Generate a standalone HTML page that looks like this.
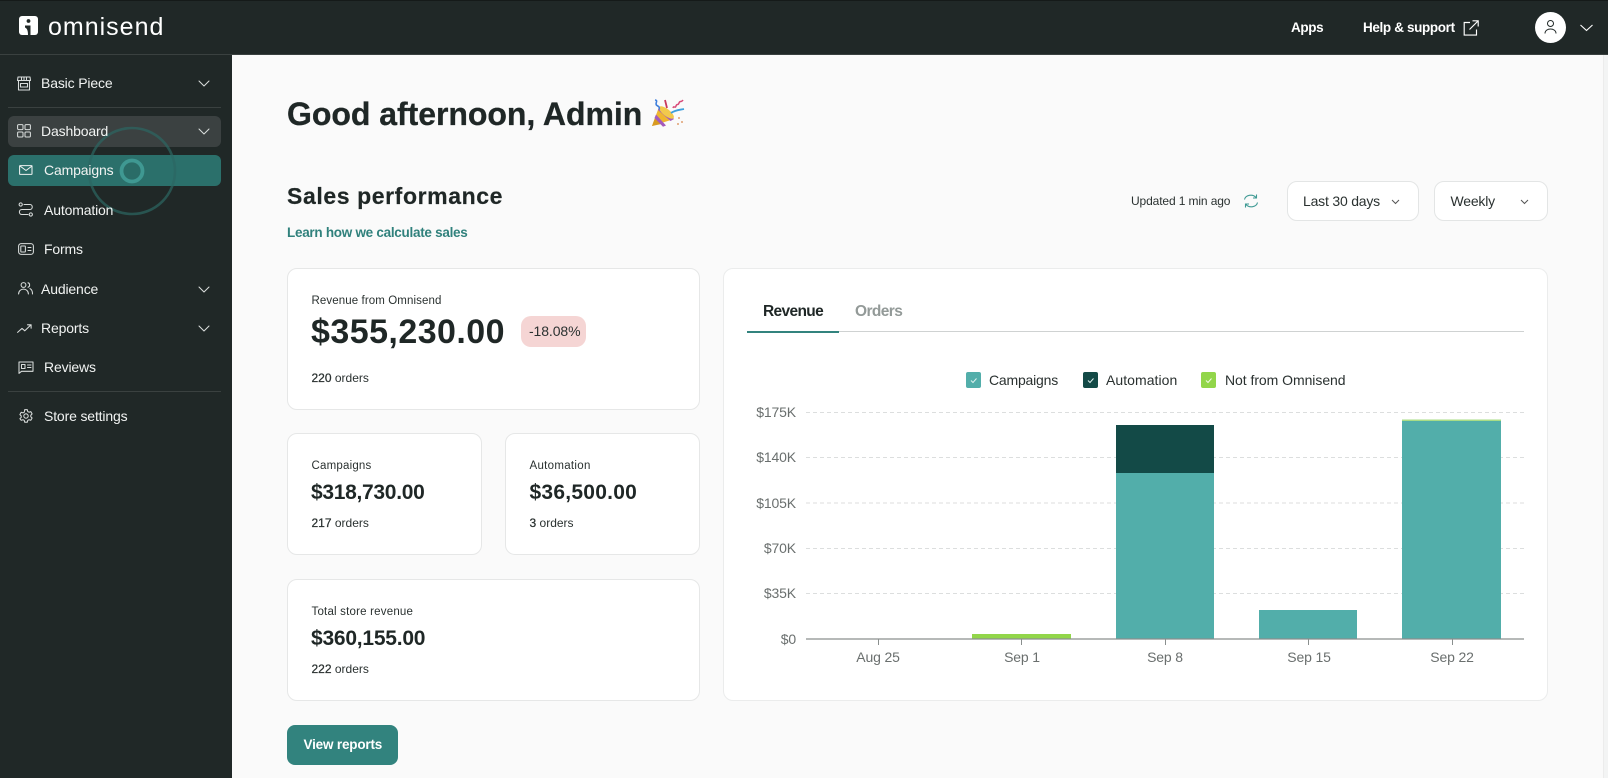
<!DOCTYPE html>
<html lang="en"><head><meta charset="utf-8"><title>Omnisend</title>
<style>
*{box-sizing:border-box;margin:0;padding:0}
html,body{width:1608px;height:778px;overflow:hidden;background:#fafafa;font-family:"Liberation Sans",sans-serif;color:#1f2726}
.t{position:absolute;white-space:nowrap;line-height:20px;height:20px}
.side{position:absolute;left:0;top:0;width:232px;height:778px;background:#202827}
.top{position:absolute;left:0;top:0;width:1608px;height:55px;background:#202827;border-top:1px solid #151a19;border-bottom:1px solid #3a4140}
.n{color:#f1f3f2;font-size:14px;letter-spacing:-.15px}
.card{position:absolute;background:#fff;border:1px solid #e6e7e7;border-radius:10px}
.lab{font-size:11.5px;letter-spacing:.2px;color:#2a3130}
.val{font-weight:700;font-size:21px;letter-spacing:-.3px}
.ord{font-size:12px;color:#2a3130}
.ord b{font-weight:400;-webkit-text-stroke:.25px #2a3130}
.ax{font-size:14px;color:#6a6f6e;letter-spacing:-.15px}
.leg{font-size:14px;color:#2a3130}
.sel{position:absolute;background:#fff;border:1px solid #e3e5e5;border-radius:10px;height:40px}
svg{position:absolute;overflow:visible}
.ic{fill:none;stroke:#d9dddc;stroke-width:1.05;stroke-linecap:round;stroke-linejoin:round}
</style></head><body>

<div class="side"></div>
<div class="top"></div>

<!-- logo -->
<svg style="left:19px;top:16px" width="20" height="20" viewBox="0 0 20 20"><rect width="19" height="19" rx="3" fill="#fff"/><circle cx="9.500" cy="5" r="1.900" fill="#202827"/><path d="M6 9.500h5.500v9.500H9c0-3.500-.5-6.500-3-7.500z" fill="#202827"/></svg>
<div class="t" style="left:48px;top:17px;font-size:25px;line-height:20px;color:#fff;letter-spacing:1px">omnisend</div>

<!-- top right -->
<div class="t" style="left:1291px;top:18px;color:#fff;font-size:13.5px;font-weight:700;letter-spacing:-.38px">Apps</div>
<div class="t" style="left:1363px;top:18px;color:#fff;font-size:13.5px;font-weight:700;letter-spacing:-.36px">Help &amp; support</div>
<svg style="left:1463px;top:20px" width="16" height="16" viewBox="0 0 16 16" fill="none" stroke="#fff" stroke-width="1.150"><path d="M7 2.500H1.200v12.600h12.300V9.500M9.500 .8h5.700v5.700M15 1L6.500 9.500"/></svg>
<svg style="left:1535px;top:12px" width="31" height="31" viewBox="0 0 31 31"><circle cx="15.500" cy="15.500" r="15.500" fill="#fff"/><circle cx="15.500" cy="11.500" r="3" fill="none" stroke="#202827" stroke-width="1"/><path d="M10 21.500c0-6 11-6 11 0" fill="none" stroke="#202827" stroke-width="1"/></svg>
<svg style="left:1580px;top:24px" width="13" height="8" viewBox="0 0 13 8" fill="none" stroke="#fff" stroke-width="1.100"><path d="M.5 1l6 5.500 6-5.500"/></svg>

<!-- nav -->
<div style="position:absolute;left:8px;top:107px;width:213px;height:1px;background:#3a4140"></div>
<div style="position:absolute;left:8px;top:116px;width:213px;height:31px;background:#3b4141;border-radius:6px"></div>
<div style="position:absolute;left:8px;top:155px;width:213px;height:31px;background:#2b706b;border-radius:6px"></div>
<div style="position:absolute;left:8px;top:391px;width:213px;height:1px;background:#3a4140"></div>

<!-- ripple -->
<svg style="left:85px;top:124px" width="94" height="94" viewBox="0 0 94 94" fill="none"><circle cx="47" cy="47" r="43" stroke="#2c6662" stroke-width="2.600" opacity=".7"/><circle cx="47" cy="47" r="10.500" stroke="#3f9892" stroke-width="3.800" fill="#2a6c67"/></svg>

<!-- nav icons -->
<svg class="ic" style="left:17px;top:76px" width="14" height="15" viewBox="0 0 14 15"><path d="M1 1h12l.5 3.500H.5zM1.500 4.500V14h11V4.500M3.500 7.500h7v3.500h-7zM4.500 1v3.500M7 1v3.500M9.500 1v3.500"/></svg>
<svg class="ic" style="left:17px;top:124px" width="14" height="14" viewBox="0 0 14 14"><rect x=".6" y=".6" width="5.400" height="5" rx="1"/><rect x="8" y=".6" width="5.400" height="5" rx="1"/><rect x=".6" y="8" width="5.400" height="5" rx="1"/><rect x="8" y="8" width="5.400" height="5" rx="1"/></svg>
<svg class="ic" style="left:19px;top:165px;stroke:#eef2f1" width="14" height="10" viewBox="0 0 14 10"><rect x=".6" y=".6" width="12.400" height="8.800" rx=".5"/><path d="M1 1l6 4.500L13 1"/></svg>
<svg class="ic" style="left:18px;top:202px" width="16" height="15" viewBox="0 0 16 15"><circle cx="2.700" cy="2.500" r="1.600"/><circle cx="12.800" cy="12.500" r="1.600"/><path d="M6 2.500h6c3 0 3 5 0 5H4c-3.500 0-3.500 5 0 5h6"/></svg>
<svg class="ic" style="left:18px;top:243px" width="16" height="12" viewBox="0 0 16 12"><rect x=".6" y=".6" width="14.800" height="10.800" rx="2.500"/><rect x="2.800" y="3" width="4.600" height="6" rx=".6"/><path d="M10 4.500h3M10 7.500h3"/></svg>
<svg class="ic" style="left:18px;top:282px" width="15" height="13" viewBox="0 0 15 13"><circle cx="5.500" cy="3" r="2.400"/><path d="M.6 12c0-6.500 9.800-6.500 9.800 0M10 .8c2 .3 2.300 3.800 0 4.400M12 6.600c1.800.8 2.500 2.800 2.500 5.400"/></svg>
<svg class="ic" style="left:17px;top:324px" width="15" height="9" viewBox="0 0 15 9"><path d="M.6 8.400l4.400-4 2.800 2.400L13.800 1M10.500.8h3.600v3.400"/></svg>
<svg class="ic" style="left:18px;top:361px" width="16" height="13" viewBox="0 0 16 13"><path d="M1 1h14v9.300H3.500L1 12.400z"/><rect x="3.500" y="3.500" width="3.500" height="4"/><path d="M9.500 4h3.500M9.500 6.500h3.500"/></svg>
<svg class="ic" style="left:19px;top:409px" width="14" height="14" viewBox="0 0 14 14"><circle cx="7" cy="7" r="2.200"/><path d="M5.700 .7h2.600l.4 1.800 1.300.7 1.800-.6 1.300 2.300-1.300 1.300v1.500l1.300 1.300-1.300 2.300-1.800-.6-1.300.7-.4 1.800H5.700l-.4-1.800-1.300-.7-1.800.6L.9 9.700l1.300-1.300V6.900L.9 5.600l1.300-2.300 1.800.6 1.300-.7z"/></svg>

<div class="t n" style="left:41px;top:73px">Basic Piece</div>
<div class="t n" style="left:41px;top:121px">Dashboard</div>
<div class="t n" style="left:44px;top:160px">Campaigns</div>
<div class="t n" style="left:44px;top:200px">Automation</div>
<div class="t n" style="left:44px;top:239px">Forms</div>
<div class="t n" style="left:41px;top:279px">Audience</div>
<div class="t n" style="left:41px;top:318px">Reports</div>
<div class="t n" style="left:44px;top:357px">Reviews</div>
<div class="t n" style="left:44px;top:406px">Store settings</div>

<svg class="ic" style="left:198px;top:80px" width="12" height="7" viewBox="0 0 12 7"><path d="M1 1l5 5 5-5"/></svg>
<svg class="ic" style="left:198px;top:128px" width="12" height="7" viewBox="0 0 12 7"><path d="M1 1l5 5 5-5"/></svg>
<svg class="ic" style="left:198px;top:286px" width="12" height="7" viewBox="0 0 12 7"><path d="M1 1l5 5 5-5"/></svg>
<svg class="ic" style="left:198px;top:325px" width="12" height="7" viewBox="0 0 12 7"><path d="M1 1l5 5 5-5"/></svg>

<!-- scrollbar edge -->
<div style="position:absolute;left:1603px;top:55px;width:5px;height:723px;background:#f3f4f4;border-left:1px solid #ececec"></div>

<!-- headings -->
<div class="t" style="left:287px;top:104px;font-size:32px;font-weight:700;letter-spacing:-.04px;color:#1f2726;-webkit-text-stroke:.3px #1f2726">Good afternoon, Admin</div>
<svg style="left:651px;top:98px" width="34" height="30" viewBox="0 0 34 30">
<path d="M1 28L8 9l15 12z" fill="#efb62f"/><path d="M1 28l3.500-9.500 6 7.500z" fill="#d89a22"/><path d="M5 16.500l10 11-3 1.200L3.500 20zM8 9l15 12-3.500 2L7 12z" fill="#a35bbd"/><ellipse cx="15.500" cy="14.500" rx="3.500" ry="9" transform="rotate(-52 15.500 14.500)" fill="#f2c94c"/>
<path d="M4 2c4 .5-1 4 2 5.500 2 1 3 2 2 4" fill="none" stroke="#3f7fdc" stroke-width="1.600"/><path d="M14 2l2 8" stroke="#c93a5f" stroke-width="1.800"/><path d="M22 10c1-3 2 1 3-2s2 0 3-3 2 0 4-3" fill="none" stroke="#d84a78" stroke-width="1.500"/><path d="M20 15c4-3 8-3 13-4" fill="none" stroke="#3f9fdc" stroke-width="1.800"/><circle cx="28" cy="20" r="1" fill="#e0a070"/><circle cx="31" cy="24" r="1" fill="#e0a070"/><circle cx="27" cy="26" r="1" fill="#e0a070"/>
</svg>
<div class="t" style="left:287px;top:186px;font-size:23px;font-weight:700;letter-spacing:.6px;-webkit-text-stroke:.2px #1f2726">Sales performance</div>
<div class="t" style="left:287px;top:223px;font-size:13.5px;font-weight:700;color:#30817c;letter-spacing:-.28px">Learn how we calculate sales</div>

<!-- filters -->
<div class="t" style="left:1131px;top:191px;font-size:12px;color:#2a3130;letter-spacing:-.12px">Updated 1 min ago</div>
<svg style="left:1243px;top:193px" width="16" height="16" viewBox="0 0 16 16" fill="none" stroke="#3f9a94" stroke-width="1.100"><path d="M1.500 6.500C2.500 2 9.500 .5 13 4.500M14.500 9.500C13.500 14 6.500 15.500 3 11.500M13.500 1.500v3.500H10M2.500 14.500V11H6"/></svg>
<div class="sel" style="left:1287px;top:181px;width:132px"></div>
<div class="sel" style="left:1434px;top:181px;width:114px"></div>
<div class="t" style="left:1303px;top:191px;font-size:14px;color:#2a3130;letter-spacing:-.2px">Last 30 days</div>
<div class="t" style="left:1450.500px;top:191px;font-size:14px;color:#2a3130;letter-spacing:-.2px">Weekly</div>
<svg style="left:1391px;top:199px" width="9" height="6" viewBox="0 0 9 6" fill="none" stroke="#555" stroke-width="1"><path d="M1 1l3.500 3.500L8 1"/></svg>
<svg style="left:1520px;top:199px" width="9" height="6" viewBox="0 0 9 6" fill="none" stroke="#555" stroke-width="1"><path d="M1 1l3.500 3.500L8 1"/></svg>

<!-- left cards -->
<div class="card" style="left:287px;top:268px;width:413px;height:142px"></div>
<div class="t lab" style="left:311.500px;top:291px;letter-spacing:.1px">Revenue from Omnisend</div>
<div class="t" style="left:311px;top:322px;font-size:34px;font-weight:700;letter-spacing:.45px">$355,230.00</div>
<div style="position:absolute;left:521px;top:316px;width:65px;height:31px;background:#f5d5d4;border-radius:10px"></div>
<div class="t" style="left:529px;top:321px;font-size:14px;color:#2a3130;letter-spacing:-.1px">-18.08%</div>
<div class="t ord" style="left:311.500px;top:368px"><b>220</b> orders</div>

<div class="card" style="left:287px;top:433px;width:195px;height:122px"></div>
<div class="t lab" style="left:311.500px;top:456px">Campaigns</div>
<div class="t val" style="left:311px;top:483px">$318,730.00</div>
<div class="t ord" style="left:311.500px;top:513px"><b>217</b> orders</div>

<div class="card" style="left:505px;top:433px;width:195px;height:122px"></div>
<div class="t lab" style="left:529.500px;top:456px;letter-spacing:.3px">Automation</div>
<div class="t val" style="left:529.500px;top:483px;letter-spacing:.25px">$36,500.00</div>
<div class="t ord" style="left:529.500px;top:513px"><b>3</b> orders</div>

<div class="card" style="left:287px;top:579px;width:413px;height:122px"></div>
<div class="t lab" style="left:311.500px;top:602px">Total store revenue</div>
<div class="t val" style="left:311px;top:629px;letter-spacing:-.23px">$360,155.00</div>
<div class="t ord" style="left:311.500px;top:659px"><b>222</b> orders</div>

<div style="position:absolute;left:287px;top:725px;width:111px;height:40px;background:#32837e;border-radius:8px"></div>
<div class="t" style="left:303.500px;top:735px;font-size:13.5px;font-weight:700;color:#fff;letter-spacing:-.18px">View reports</div>

<!-- chart card -->
<div class="card" style="left:723px;top:268px;width:825px;height:433px;border-color:#ebecec"></div>
<div class="t" style="left:763px;top:302px;font-size:15.500px;font-weight:700;letter-spacing:-.65px">Revenue</div>
<div class="t" style="left:855px;top:302px;font-size:15.500px;font-weight:700;letter-spacing:-.6px;color:#939a98">Orders</div>
<div style="position:absolute;left:747px;top:331px;width:777px;height:1px;background:#cfd2d2"></div>
<div style="position:absolute;left:747px;top:331px;width:92px;height:1.500px;background:#32837e"></div>

<!-- legend -->
<svg style="left:966px;top:372px" width="15" height="16" viewBox="0 0 15 16"><rect width="15" height="16" rx="2" fill="#52aeaa"/><path d="M5 8.500l2 2 3.500-4" fill="none" stroke="#dff2f0" stroke-width="1"/></svg>
<div class="t leg" style="left:989px;top:370px;letter-spacing:-.2px">Campaigns</div>
<svg style="left:1083px;top:372px" width="15" height="16" viewBox="0 0 15 16"><rect width="15" height="16" rx="2" fill="#134a47"/><path d="M5 8.500l2 2 3.500-4" fill="none" stroke="#dff2f0" stroke-width="1"/></svg>
<div class="t leg" style="left:1106px;top:370px;letter-spacing:.05px">Automation</div>
<svg style="left:1201px;top:372px" width="15" height="16" viewBox="0 0 15 16"><rect width="15" height="16" rx="2" fill="#92d64a"/><path d="M5 8.500l2 2 3.500-4" fill="none" stroke="#f2fbe8" stroke-width="1"/></svg>
<div class="t leg" style="left:1225px;top:370px;letter-spacing:-.05px">Not from Omnisend</div>

<!-- chart -->
<svg style="left:0;top:0" width="1608" height="778" viewBox="0 0 1608 778">
<g stroke="#dcdede" stroke-width="1" stroke-dasharray="4 3">
<line x1="806" x2="1524" y1="412.500" y2="412.500"/><line x1="806" x2="1524" y1="457.500" y2="457.500"/><line x1="806" x2="1524" y1="503" y2="503"/><line x1="806" x2="1524" y1="548.500" y2="548.500"/><line x1="806" x2="1524" y1="593.500" y2="593.500"/>
</g>
<g stroke="#fff" stroke-width="0"><rect x="972" y="634" width="99" height="5" fill="#92d64a"/>
<rect x="1116" y="473" width="98" height="166" fill="#52aeaa"/><rect x="1116" y="425" width="98" height="48" fill="#134a47"/>
<rect x="1259" y="610" width="98" height="29" fill="#52aeaa"/>
<rect x="1402" y="421" width="99" height="218" fill="#52aeaa"/><rect x="1402" y="419.500" width="99" height="1.500" fill="#a9dc85"/></g>
<line x1="806" x2="1524" y1="639" y2="639" stroke="#8a8f8e" stroke-width="1.200"/>
<g stroke="#8a8f8e" stroke-width="1"><line x1="878.500" x2="878.500" y1="639" y2="645"/><line x1="1021.500" x2="1021.500" y1="639" y2="645"/><line x1="1165.500" x2="1165.500" y1="639" y2="645"/><line x1="1308.500" x2="1308.500" y1="639" y2="645"/><line x1="1452.500" x2="1452.500" y1="639" y2="645"/></g>
</svg>

<div class="t ax" style="left:756px;width:40px;top:402px;text-align:right">$175K</div>
<div class="t ax" style="left:756px;width:40px;top:447px;text-align:right">$140K</div>
<div class="t ax" style="left:756px;width:40px;top:493px;text-align:right">$105K</div>
<div class="t ax" style="left:756px;width:40px;top:538px;text-align:right">$70K</div>
<div class="t ax" style="left:756px;width:40px;top:583px;text-align:right">$35K</div>
<div class="t ax" style="left:756px;width:40px;top:629px;text-align:right">$0</div>
<div class="t ax" style="left:838px;width:80px;top:647px;text-align:center">Aug 25</div>
<div class="t ax" style="left:982px;width:80px;top:647px;text-align:center">Sep 1</div>
<div class="t ax" style="left:1125px;width:80px;top:647px;text-align:center">Sep 8</div>
<div class="t ax" style="left:1269px;width:80px;top:647px;text-align:center">Sep 15</div>
<div class="t ax" style="left:1412px;width:80px;top:647px;text-align:center">Sep 22</div>

</body></html>
